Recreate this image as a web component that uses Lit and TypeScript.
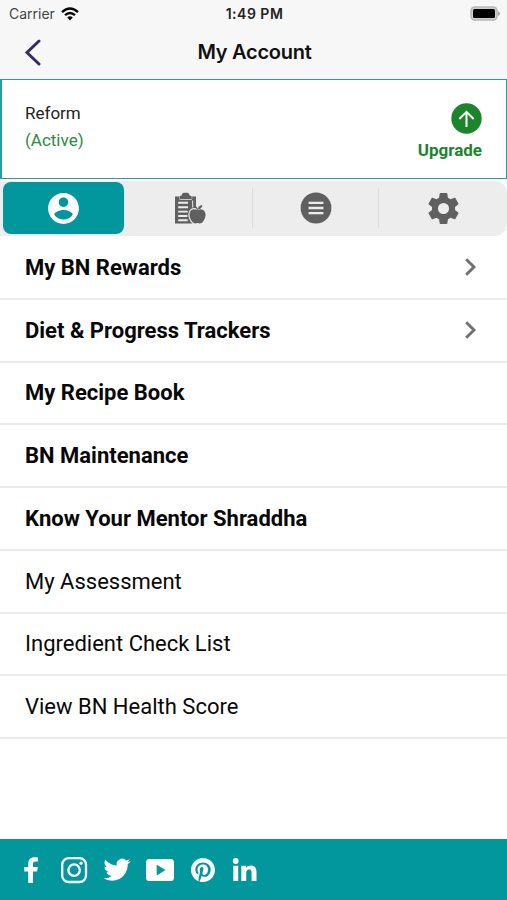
import { LitElement, html, css, svg } from "lit";
import { customElement, property } from "lit/decorators.js";
import { classMap } from "lit/directives/class-map.js";

const TABS = [
  // profile
  svg`<svg width="37" height="37" viewBox="0 0 24 24"><path fill="currentColor" d="M12 2C6.48 2 2 6.48 2 12s4.48 10 10 10 10-4.480 10-10S17.520 2 12 2zm0 2.900c1.660 0 3.100 1.340 3.100 3.050s-1.440 3.050-3.100 3.050-3.100-1.340-3.100-3.050 1.440-3.050 3.100-3.050zm0 14.300c-2.500 0-4.710-1.280-6-3.220.03-1.990 4-3.080 6-3.080 1.990 0 5.970 1.090 6 3.080-1.290 1.940-3.500 3.220-6 3.220z"/></svg>`,
  // diet clipboard
  svg`<svg width="32" height="32" viewBox="0 0 32 32">
    <path fill="currentColor" d="M1 4.500h5v3h11.500v-3h4.500v27H1z"/>
    <path fill="currentColor" stroke="#ededed" stroke-width="1" paint-order="stroke" d="M5.500 7V5q0-1.200 1.200-1.200h.8Q8 .8 10 .8h3.200q2 0 2.500 3h.8q1.200 0 1.200 1.200v2z"/>
    <path stroke="#ededed" stroke-width="1.900" fill="none" d="M4.200 10.800h9.800M4.200 15.200h9.800M4.200 19.600h9.500M4.200 24h9.200M4.200 28.200h9.500"/>
    <path stroke="#ededed" stroke-width="1" fill="none" d="M18.700 8.500v7"/>
    <path fill="currentColor" stroke="#ededed" stroke-width="2.400" paint-order="stroke" d="M23.400 18.300c1.900-1.300 4-1.500 5.800-.4 3.100 2.100 2.900 6.800.9 10-1.700 2.900-3.500 4-5.400 3.300-.9-.3-1.500-.3-2.400 0-2.200.8-4.200-.9-5.600-3.700-1.800-3.600-1.700-7.800.9-9.500 1.800-1.200 3.800-.9 5.800.3z"/>
    <path fill="currentColor" d="M24 17.200c.1-2.500 1.500-4 4.300-4.300-.1 2.600-1.700 4.100-4.300 4.300z"/>
    <path stroke="currentColor" fill="none" stroke-width="1.200" d="M23.500 18.500c-.1-1.500-.6-2.500-1.500-3.500"/>
  </svg>`,
  // menu
  svg`<svg width="32" height="32" viewBox="0 0 32 32"><circle cx="16" cy="16" r="15.400" fill="currentColor"/><path stroke="#ededed" stroke-width="2.300" d="M8.600 10.900h14.800M8.600 16h14.800M8.600 21.200h14.800"/></svg>`,
  // settings
  svg`<svg width="37" height="37" viewBox="0 0 24 24"><path fill="currentColor" d="M19.430 12.980c.04-.32.07-.64.07-.98s-.03-.66-.07-.98l2.110-1.650c.19-.15.24-.42.12-.64l-2-3.460c-.12-.22-.39-.3-.61-.22l-2.490 1c-.52-.4-1.080-.73-1.690-.98l-.38-2.650C14.460 2.180 14.250 2 14 2h-4c-.25 0-.46.18-.49.42l-.38 2.650c-.61.25-1.170.59-1.690.98l-2.490-1c-.23-.09-.49 0-.61.22l-2 3.460c-.13.22-.07.49.12.64l2.110 1.650c-.04.32-.07.65-.07.98s.03.66.07.98l-2.110 1.650c-.19.15-.24.42-.12.64l2 3.460c.12.22.39.3.61.22l2.490-1c.52.4 1.080.73 1.690.98l.38 2.650c.03.24.24.42.49.42h4c.25 0 .46-.18.49-.42l.38-2.650c.61-.25 1.170-.59 1.690-.98l2.490 1c.23.09.49 0 .61-.22l2-3.460c.12-.22.07-.49-.12-.64l-2.110-1.650zM12 15.600a3.600 3.600 0 1 1 0-7.200 3.600 3.600 0 0 1 0 7.200z"/></svg>`,
];

const SOCIAL = [
  // facebook
  svg`<svg width="28" height="28" viewBox="0 0 28 28"><path fill="#fff" d="M11.200 27V15.600H7.300v-4.500h3.900V7.700C11.200 3.500 13.500 1.200 17.300 1.200c1.800 0 3.100.2 3.700.3v4.100h-2.500c-2 0-2.500 1-2.500 2.400v3.100h4.800l-.7 4.500H16V27z"/></svg>`,
  // instagram
  svg`<svg width="28" height="28" viewBox="0 0 28 28"><rect x="2.200" y="2.200" width="23.800" height="23.800" rx="6.500" fill="none" stroke="#fff" stroke-width="2.300"/><circle cx="14.100" cy="14.100" r="5.700" fill="none" stroke="#fff" stroke-width="2.300"/><circle cx="21" cy="7.200" r="1.600" fill="#fff"/></svg>`,
  // twitter
  svg`<svg width="28" height="28" viewBox="-.4 -.2 24.900 24.900"><path fill="#fff" d="M23.953 4.570a10 10 0 01-2.825.775 4.958 4.958 0 002.163-2.723c-.951.555-2.005.959-3.127 1.184a4.920 4.920 0 00-8.384 4.482C7.690 8.095 4.067 6.130 1.640 3.162a4.822 4.822 0 00-.666 2.475c0 1.710.87 3.213 2.188 4.096a4.904 4.904 0 01-2.228-.616v.06a4.923 4.923 0 003.946 4.827 4.996 4.996 0 01-2.212.085 4.936 4.936 0 004.604 3.417 9.867 9.867 0 01-6.102 2.105c-.39 0-.779-.023-1.170-.067a13.995 13.995 0 007.557 2.209c9.053 0 13.998-7.496 13.998-13.985 0-.21 0-.42-.015-.63A9.935 9.935 0 0024 4.590z"/></svg>`,
  // youtube
  svg`<svg width="30" height="28" viewBox="0 0 30 28"><path fill="#fff" fill-rule="evenodd" d="M4 3h22q3 0 3 3.500v15q0 3.500-3 3.500H4q-3 0-3-3.500v-15Q1 3 4 3zM11.700 8.700v10.800l8.800-5.400z"/></svg>`,
  // pinterest
  svg`<svg width="28" height="28" viewBox="-2 -2 28 28"><path fill="#fff" d="M12.017 0C5.396 0 .029 5.367.029 11.987c0 5.079 3.158 9.417 7.618 11.162-.105-.949-.199-2.403.041-3.439.219-.937 1.406-5.957 1.406-5.957s-.359-.72-.359-1.781c0-1.663.967-2.911 2.168-2.911 1.024 0 1.518.769 1.518 1.688 0 1.029-.653 2.567-.992 3.992-.285 1.193.6 2.165 1.775 2.165 2.128 0 3.768-2.245 3.768-5.487 0-2.861-2.063-4.869-5.008-4.869-3.410 0-5.409 2.562-5.409 5.199 0 1.033.394 2.143.889 2.741.099.12.112.225.085.345-.09.375-.293 1.199-.334 1.363-.053.225-.172.271-.401.165-1.495-.69-2.433-2.878-2.433-4.646 0-3.776 2.748-7.252 7.920-7.252 4.158 0 7.392 2.967 7.392 6.923 0 4.135-2.607 7.462-6.233 7.462-1.214 0-2.354-.629-2.758-1.379l-.749 2.848c-.269 1.045-1.004 2.352-1.498 3.146 1.123.345 2.306.535 3.550.535 6.607 0 11.985-5.365 11.985-11.987C23.970 5.390 18.592.026 11.985.026L12.017 0z"/></svg>`,
  // linkedin
  svg`<svg width="28" height="28" viewBox="0 0 28 28"><circle cx="4.700" cy="5" r="2.900" fill="#fff"/><path fill="#fff" d="M2.300 9.800h4.900V25H2.300zM10.300 9.800h4.600v2.100c.9-1.500 2.500-2.500 4.700-2.500 4.800 0 5.900 3 5.900 7.200V25h-4.900v-7.500c0-1.900-.1-4-2.500-4s-2.900 1.900-2.900 3.900V25h-4.900z"/></svg>`,
];

const ROWS = [
  { label: "My BN Rewards", strong: true, arrow: true },
  { label: "Diet & Progress Trackers", strong: true, arrow: true },
  { label: "My Recipe Book", strong: true },
  { label: "BN Maintenance", strong: true },
  { label: "Know Your Mentor Shraddha", strong: true },
  { label: "My Assessment" },
  { label: "Ingredient Check List" },
  { label: "View BN Health Score" },
];

@customElement("menu-row")
class MenuRow extends LitElement {
  @property() label = "";
  @property({ type: Boolean }) strong = false;
  @property({ type: Boolean }) arrow = false;

  static styles = css`
    :host { display: flex; align-items: center; justify-content: space-between; box-sizing: border-box; height: 62.75px; padding: 0 30px 0 25px; border-bottom: 2px solid #ebebeb; color: #080808; font-size: 22px; }
    .label { white-space: nowrap; }
    .strong { font-weight: 700; }
  `;

  render() {
    return html`<span class=${classMap({ label: true, strong: this.strong })}>${this.label}</span>
      ${this.arrow ? html`<svg width="13" height="20" viewBox="0 0 13 20"><path d="M2.200 2.200L10 10l-7.800 7.800" fill="none" stroke="#707070" stroke-width="2.900"/></svg>` : null}`;
  }
}

@customElement("app-root")
class AppRoot extends LitElement {
  static styles = css`
    :host { display: flex; flex-direction: column; width: 507px; height: 900px; background: #fff; overflow: hidden; font-family: Roboto, "Liberation Sans", sans-serif; }
    svg { display: block; flex: none; }
    .top { background: #f7f7f7; height: 79px; flex: none; font-family: Inter, "Liberation Sans", sans-serif; }
    .status { height: 27px; display: grid; grid-template-columns: 1fr auto 1fr; align-items: center; padding: 0 7px 0 9px; box-sizing: border-box; color: #222; }
    .carrier { display: flex; align-items: center; gap: 6px; font-size: 14px; color: #444; }
    .time { font-size: 14px; font-weight: 600; letter-spacing: 0.5px; }
    .battery { justify-self: end; }
    .nav { height: 52px; display: grid; grid-template-columns: 60px 1fr 60px; align-items: center; padding-bottom: 2px; box-sizing: border-box; }
    .back { padding-left: 23px; }
    .title { text-align: center; font-size: 20px; font-weight: 600; letter-spacing: -0.27px; color: #111; padding-left: 2px; }
    .plan { flex: none; box-sizing: border-box; height: 100px; border: 1.500px solid #259ca3; border-left-width: 2px; display: flex; justify-content: space-between; padding: 20px 24px 0 23px; font-size: 17px; }
    .name { line-height: 27px; color: #222; }
    .active { line-height: 27px; color: #2a8c3c; }
    .upgrade { display: flex; flex-direction: column; align-items: flex-end; gap: 5px; padding-top: 3px; color: #1c852c; font-weight: 700; line-height: 22px; }
    .tabs { flex: none; display: grid; grid-template-columns: 126px 126px 126px 1fr; height: 55px; margin-top: 2px; padding-left: 1px; box-sizing: border-box; background: #ededed; border-radius: 0 12px 12px 0; color: #606060; }
    .tab { display: flex; align-items: center; justify-content: center; margin: 7px 0 8px; border-right: 1px solid #dcdcdc; }
    .tab:last-child { border-right: 0; }
    .current { margin: 1px 3px 2px 2px; border: 0; border-radius: 8px; background: #02979d; color: #fff; }
    .list { flex: 1; padding-top: 1px; }
    .footer { flex: none; height: 61px; box-sizing: border-box; background: #02979d; display: grid; grid-template-columns: repeat(6, 42.800px); justify-items: center; align-items: center; padding-left: 10px; }
  `;

  render() {
    return html`
      <header class="top">
        <div class="status">
          <span class="carrier">Carrier
            <svg width="18" height="14" viewBox="0 0 18 14"><g fill="none" stroke="#050505" stroke-width="2.400"><path d="M1 5.100q8-7.200 16 0"/><path d="M4 8.200q5-4.400 10 0"/></g><path fill="#050505" d="M6.200 10.500q2.800-2.300 5.600 0L9 13.500z"/></svg>
          </span>
          <span class="time">1:49 PM</span>
          <svg class="battery" width="31" height="15" viewBox="0 0 31 15"><rect x="2" y="1" width="26" height="13" rx="4" fill="#cfcfcf" stroke="#b8b8b8" stroke-width="1.600"/><rect x="4" y="3" width="22" height="9" rx="1.500" fill="#000"/><path d="M29 5q2 1 2 2.500t-2 2.500z" fill="#a8a8a8"/></svg>
        </div>
        <div class="nav">
          <svg class="back" width="20" height="28" viewBox="0 0 20 28"><path d="M16 3L4 14.500 16 26" fill="none" stroke="#322d63" stroke-width="3" stroke-linecap="round"/></svg>
          <span class="title">My Account</span>
        </div>
      </header>
      <section class="plan">
        <div><div class="name">Reform</div><div class="active">(Active)</div></div>
        <div class="upgrade">
          <svg width="31" height="31" viewBox="0 0 31 31"><circle cx="15.500" cy="15.500" r="15.200" fill="#1c852c"/><path d="M15.500 24V9M8.300 16l7.200-7.200 7.200 7.200" fill="none" stroke="#fff" stroke-width="2"/></svg>
          <span>Upgrade</span>
        </div>
      </section>
      <nav class="tabs">
        ${TABS.map((icon, i) => html`<div class=${classMap({ tab: true, current: i === 0 })}>${icon}</div>`)}
      </nav>
      <main class="list">
        ${ROWS.map((r) => html`<menu-row .label=${r.label} .strong=${!!r.strong} .arrow=${!!r.arrow}></menu-row>`)}
      </main>
      <footer class="footer">${SOCIAL}</footer>
    `;
  }
}
